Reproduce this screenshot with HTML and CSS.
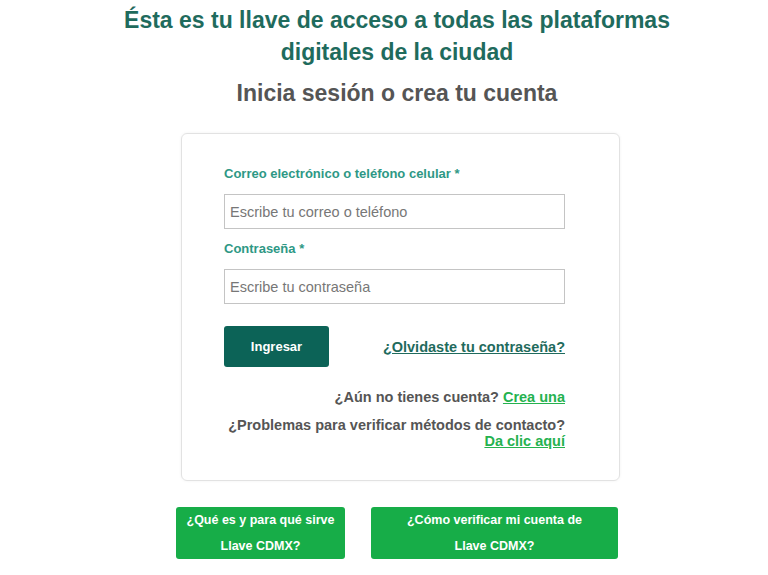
FILE: index.html
```html
<!DOCTYPE html>
<html lang="es">
<head>
    <meta charset="UTF-8">
    <meta name="viewport" content="width=device-width, initial-scale=1.0">
    <title>Llave CDMX - Inicia sesión</title>
    <link rel="stylesheet" href="styles.css">
</head>
<body>
    <h1 class="title">Ésta es tu llave de acceso a todas las plataformas<br>digitales de la ciudad</h1>
    <h2 class="subtitle">Inicia sesión o crea tu cuenta</h2>
    <div class="login-card">
        <form id="loginForm" class="login-form">
            <label for="user">Correo electrónico o teléfono celular *</label>
            <input type="text" id="user" name="user" placeholder="Escribe tu correo o teléfono">
            <label for="password">Contraseña *</label>
            <input type="password" id="password" name="password" placeholder="Escribe tu contraseña">
            <div class="form-actions">
                <button type="submit" class="btn-login">Ingresar</button>
                <a href="#" class="link-forgot">¿Olvidaste tu contraseña?</a>
            </div>
        </form>
        <p class="extra-line">¿Aún no tienes cuenta? <a href="#" class="link-green">Crea una</a></p>
        <p class="extra-line problems">¿Problemas para verificar métodos de contacto?<br><a href="#" class="link-green">Da clic aquí</a></p>
    </div>
    <div class="help-buttons">
        <a href="#" class="btn-help help-what">¿Qué es y para qué sirve<br>Llave CDMX?</a>
        <a href="#" class="btn-help help-verify">¿Cómo verificar mi cuenta de<br>Llave CDMX?</a>
    </div>
</body>
</html>
```

FILE: styles.css
```css
body {
    margin: 0;
    padding-left: 26px;
    font-family: "Liberation Sans", Arial, sans-serif;
    background-color: #fff;
    color: #555;
}
.title {
    margin: 4px 0 0;
    font-size: 23px;
    line-height: 32px;
    text-align: center;
    color: #1f6b5d;
}
.subtitle {
    margin: 9px 0 0;
    font-size: 23px;
    line-height: 32px;
    text-align: center;
    color: #555;
}
.login-card {
    width: 439px;
    box-sizing: border-box;
    margin: 24px 0 0 calc(50% - 216px);
    padding: 32px 54px 31px 42px;
    border: 1px solid #e2e2e2;
    border-radius: 6px;
    box-shadow: 0 0 3px rgba(0, 0, 0, 0.06);
}
.login-form label {
    display: block;
    font-size: 13px;
    line-height: 16px;
    font-weight: bold;
    color: #2e9885;
}
.login-form input {
    display: block;
    width: 100%;
    height: 35px;
    box-sizing: border-box;
    margin: 12px 0;
    padding: 0 5px;
    border: 1px solid #c4c4c4;
    font-family: inherit;
    font-size: 14.5px;
    color: #444;
}
.login-form input::placeholder {
    color: #777;
}
.form-actions {
    display: flex;
    align-items: center;
    justify-content: space-between;
    margin-top: 22px;
}
.btn-login {
    width: 105px;
    height: 41px;
    border: none;
    border-radius: 3px;
    background-color: #0c6357;
    color: #fff;
    font-family: inherit;
    font-size: 13px;
    font-weight: bold;
    cursor: pointer;
}
.link-forgot {
    color: #1f6b5d;
    font-size: 14.5px;
    font-weight: bold;
}
.extra-line {
    margin: 22px 0 0;
    text-align: right;
    font-size: 14.5px;
    line-height: 16px;
    font-weight: bold;
    white-space: nowrap;
    color: #555;
}
.extra-line.problems {
    margin-top: 12px;
}
.link-green {
    color: #25b24f;
}
.help-buttons {
    display: flex;
    justify-content: center;
    gap: 26px;
    margin-top: 26px;
}
.btn-help {
    display: block;
    height: 52px;
    border-radius: 3px;
    background-color: #17ad48;
    color: #fff;
    text-decoration: none;
    text-align: center;
    font-size: 12.5px;
    line-height: 26px;
    font-weight: bold;
}
.help-what {
    width: 169px;
}
.help-verify {
    width: 247px;
}
```
